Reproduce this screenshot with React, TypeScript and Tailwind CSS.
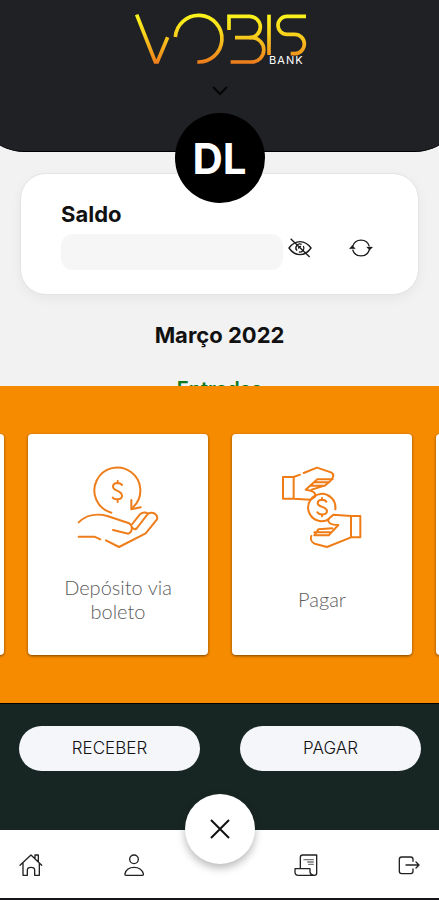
import type { ReactNode } from "react";

function Logo() {
  return (
    <svg viewBox="36 36 528 162" className="h-[54px] w-44" role="img" aria-label="Vobis Bank">
      <defs>
        <linearGradient id="gold" gradientUnits="userSpaceOnUse" x1="0" y1="44" x2="0" y2="192">
          <stop offset="0" stopColor="#fbf41c" />
          <stop offset="0.4" stopColor="#f8d21c" />
          <stop offset="1" stopColor="#ee7a1c" />
        </linearGradient>
      </defs>
      <g fill="none" stroke="url(#gold)" strokeWidth="11">
        <path d="M50 44L106 186H112L143 112" />
        <path d="M166 111A70 70 0 1 1 232 186" />
        <path d="M327 90V49H389A32 32 0 0 1 389 113" />
        <path d="M345 113H395A36.500 36.500 0 0 1 395 186H332" />
        <path d="M447 44V165" />
        <path d="M558 49H501A27 27 0 0 0 501 103H524A29 29 0 0 1 524 161H512" />
      </g>
      <text x="499" y="191" textAnchor="middle" fill="#ffffff" fontSize="33" className="font-['Inter',sans-serif] tracking-widest">
        BANK
      </text>
    </svg>
  );
}

function EyeOff() {
  return (
    <svg viewBox="25 35 72 66" className="h-[22px] w-6" fill="none" stroke="#1a1a1a" strokeWidth="4" aria-hidden="true">
      <path d="M28 68Q42 49 61 49T94 68Q80 88 61 88T28 68Z" />
      <path d="M52 76A12 12 0 0 1 66 57M71 62A12 12 0 0 1 58 80M57 70A5 5 0 0 1 64 64" />
      <path d="M33 40L90 95" />
    </svg>
  );
}

function Refresh() {
  return (
    <svg viewBox="209 35 72 66" className="h-[22px] w-6" fill="none" stroke="#1a1a1a" strokeWidth="4" aria-hidden="true">
      <path d="M220 63A26 26 0 0 1 270 63M270 73A26 26 0 0 1 220 73" />
      <path d="M210 70L219 60L228 70ZM262 65L271 75L280 65Z" fill="#1a1a1a" strokeWidth="1" />
    </svg>
  );
}

function DepositIcon() {
  return (
    <svg
      viewBox="54 48 246 246"
      className="size-[82px]"
      fill="none"
      stroke="#ee7d1b"
      strokeWidth="6"
      strokeLinecap="round"
      strokeLinejoin="round"
      aria-hidden="true"
    >
      <path d="M157 188A69 69 0 1 1 222 172" />
      <path d="M217 150V178L245 172" />
      <path d="M189 105C185 97 163 95 162 109C161 124 188 120 189 137C190 151 166 150 161 143M176 93V100M176 148V156" />
      <path d="M59 217C80 196 112 189 145 198L208 219C222 224 222 245 208 251L162 240" />
      <path d="M220 222L242 194C250 184 262 187 267 191L234 234C229 240 222 237 220 233" />
      <path d="M267 191C281 183 298 193 294 208L260 250L180 291L141 271" />
      <path d="M59 260H106L124 268" />
    </svg>
  );
}

function PayIcon() {
  return (
    <svg
      viewBox="33 48 246 246"
      className="size-[82px]"
      fill="none"
      stroke="#f07c16"
      strokeWidth="6"
      strokeLinecap="round"
      strokeLinejoin="round"
      aria-hidden="true"
    >
      <path d="M39 81H71V146H39ZM71 81L90 74M101 69L141 53L183 67C194 72 191 84 180 94L164 107L125 119M71 146L122 149L136 139C138 129 129 121 107 119L142 88H188M135 97H178M124 107H164" />
      <path d="M196 178A41 41 0 1 0 176 208M196 175C197 158 188 143 173 136" />
      <path d="M169 155C163 146 143 147 143 160C144 173 170 168 171 183C171 197 147 195 142 187M156 144V150M156 194V199" />
      <path d="M271 198H243V262H271ZM243 198L190 194L175 207C172 217 181 225 205 225L176 256H133L145 238L187 235M133 247H184M124 258C120 268 126 277 134 281L171 291L243 262" />
    </svg>
  );
}

function NavIcon({ box, children }: { box: string; children: ReactNode }) {
  return (
    <svg
      viewBox={box}
      className="size-6"
      fill="none"
      stroke="#222222"
      strokeWidth="4"
      strokeLinejoin="round"
      strokeLinecap="round"
      aria-hidden="true"
    >
      {children}
    </svg>
  );
}

function ServiceCard({ icon, label }: { icon: ReactNode; label: string }) {
  return (
    <button
      type="button"
      className="flex h-[221px] w-[180px] shrink-0 flex-col items-center rounded bg-white px-7 pt-8 pb-1.5 shadow-[0_1px_3px_rgba(0,0,0,0.5)]"
    >
      {icon}
      <span className="flex flex-1 items-center text-center font-['Lato',sans-serif] text-xl leading-6 font-light text-[#5c5c5c]">
        {label}
      </span>
    </button>
  );
}

function BlankCard() {
  return <div className="h-[221px] w-[180px] shrink-0 rounded bg-white shadow-[0_1px_3px_rgba(0,0,0,0.5)]" />;
}

export default function App() {
  const pill =
    "h-[45px] rounded-full bg-[#f4f6fa] text-[17px] font-light text-[#111111]";
  return (
    <div className="flex h-screen flex-col overflow-hidden bg-[#f2f2f2] font-['Inter',sans-serif] text-[#111111]">
      <main className="min-h-0 flex-1 overflow-hidden">
        <header className="relative -mx-6 flex h-[152px] flex-col items-center rounded-b-[48px] border-b border-black bg-[#202125] pt-3">
          <Logo />
          <button type="button" aria-label="Expandir" className="mt-4 p-1">
            <svg viewBox="0 0 16 10" className="h-[10px] w-4" fill="none" stroke="#050505" strokeWidth="2" aria-hidden="true">
              <path d="M1 1L8 8L15 1" />
            </svg>
          </button>
          <div className="absolute -bottom-[52px] flex size-[90px] items-center justify-center rounded-full bg-black text-[42px] font-bold text-white">
            DL
          </div>
        </header>

        <section className="mx-5 mt-[21px] rounded-[26px] border border-[#e4e4e4] bg-white px-10 pt-6 pb-6 shadow-[0_4px_12px_rgba(0,0,0,0.05)]">
          <h2 className="text-[22px] leading-8 font-bold">Saldo</h2>
          <div className="mt-1 flex items-start">
            <div className="h-9 w-[222px] rounded-xl bg-[#f6f6f6]" />
            <button type="button" aria-label="Ocultar saldo" className="mt-[3px] ml-[5px]">
              <EyeOff />
            </button>
            <button type="button" aria-label="Atualizar saldo" className="mt-[3px] ml-[37px]">
              <Refresh />
            </button>
          </div>
        </section>

        <h1 className="mt-6 text-center text-[22px] leading-8 font-bold">Março 2022</h1>
        <h2 className="mt-6 text-center text-[20px] leading-7 font-semibold text-[#0b7a1c]">Entradas</h2>
      </main>

      <section className="overflow-hidden bg-[#f78b00] pt-12 pb-12">
        <div className="-ml-44 flex gap-6">
          <BlankCard />
          <ServiceCard icon={<DepositIcon />} label="Depósito via boleto" />
          <ServiceCard icon={<PayIcon />} label="Pagar" />
          <BlankCard />
        </div>
      </section>

      <section className="grid grid-cols-2 gap-10 border-t border-black bg-[#182623] pt-[22px] pr-[18px] pb-[59px] pl-[19px]">
        <button type="button" className={pill}>RECEBER</button>
        <button type="button" className={pill}>PAGAR</button>
      </section>

      <nav className="relative flex h-[70px] items-center justify-between border-b-2 border-[#15151a] bg-white pt-0.5 pr-[18px] pl-[19px]">
        <div className="flex gap-[79px]">
          <a href="#inicio" aria-label="Início">
            <NavIcon box="59 39 72 72">
              <path d="M62 76L95 45L127 76M71 70V106H84V90Q84 82 95 82T106 90V106H120V70M107 54V45H117V64" />
            </NavIcon>
          </a>
          <a href="#perfil" aria-label="Perfil">
            <NavIcon box="366 39 72 72">
              <circle cx="402" cy="58" r="13" />
              <path d="M378 106Q374 106 375 101Q380 82 402 82T430 101Q431 106 427 106Z" />
            </NavIcon>
          </a>
        </div>
        <button
          type="button"
          aria-label="Fechar"
          className="absolute -top-9 left-1/2 flex size-[70px] -translate-x-1/2 items-center justify-center rounded-full bg-white shadow-[0_4px_8px_rgba(0,0,0,0.28)]"
        >
          <svg viewBox="0 0 20 20" className="size-5" fill="none" stroke="#111111" strokeWidth="2" aria-hidden="true">
            <path d="M1 1L19 19M19 1L1 19" />
          </svg>
        </button>
        <div className="flex gap-[79px]">
          <a href="#extrato" aria-label="Extrato">
            <NavIcon box="46 39 72 72">
              <path d="M65 84V52Q65 45 72 45H114V100Q114 106 107 106Q96 106 94 96V86H49V96Q49 106 59 106H106" />
              <path d="M76 59H104M87 66H104M90 73H104" stroke="#777777" />
            </NavIcon>
          </a>
          <a href="#sair" aria-label="Sair">
            <NavIcon box="352 39 72 72">
              <path d="M400 64V58Q400 51 393 51H366Q359 51 359 58V94Q359 101 366 101H393Q400 101 400 94V87M379 75H416M409 66L418 75L409 84" />
            </NavIcon>
          </a>
        </div>
      </nav>
    </div>
  );
}
